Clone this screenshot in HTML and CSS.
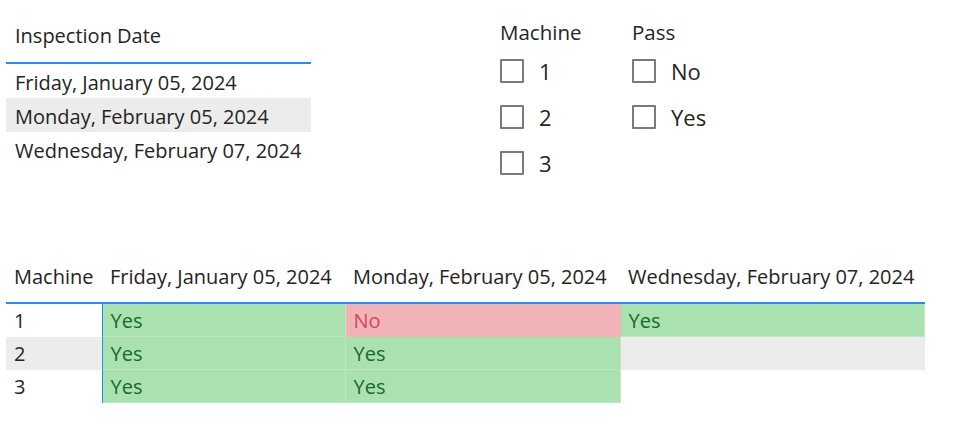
FILE: index.html
```html
<!DOCTYPE html>
<html lang="en">

<head>
  <meta charset="UTF-8" />
  <title>Inspections</title>
  <link rel="stylesheet" href="styles.css">
</head>

<body>
  <div class="arriba">
    <div class="lista-fechas">
      <div class="titulo-lista">Inspection Date</div>
      <div class="fila-fecha">Friday, January 05, 2024</div>
      <div class="fila-fecha gris">Monday, February 05, 2024</div>
      <div class="fila-fecha">Wednesday, February 07, 2024</div>
    </div>

    <div class="filtro">
      <div class="titulo-filtro">Machine</div>
      <div class="opcion"><span class="caja"></span>1</div>
      <div class="opcion"><span class="caja"></span>2</div>
      <div class="opcion"><span class="caja"></span>3</div>
    </div>

    <div class="filtro">
      <div class="titulo-filtro">Pass</div>
      <div class="opcion"><span class="caja"></span>No</div>
      <div class="opcion"><span class="caja"></span>Yes</div>
    </div>
  </div>

  <table class="matriz">
    <thead>
      <tr>
        <th class="col-maquina">Machine</th>
        <th class="col-a">Friday, January 05, 2024</th>
        <th class="col-b">Monday, February 05, 2024</th>
        <th class="col-c">Wednesday, February 07, 2024</th>
      </tr>
    </thead>
    <tbody>
      <tr>
        <td class="maquina">1</td>
        <td class="si">Yes</td>
        <td class="no">No</td>
        <td class="si">Yes</td>
      </tr>
      <tr class="gris">
        <td class="maquina">2</td>
        <td class="si">Yes</td>
        <td class="si">Yes</td>
        <td></td>
      </tr>
      <tr>
        <td class="maquina">3</td>
        <td class="si">Yes</td>
        <td class="si">Yes</td>
        <td class="vacio"></td>
      </tr>
    </tbody>
  </table>
</body>

</html>
```

FILE: styles.css
```css
body {
  margin: 0;
  font-family: "Open Sans", "Noto Sans", sans-serif;
  color: #252423;
  background: #fff;
}

.arriba {
  display: flex;
  height: 250px;
}

.lista-fechas {
  width: 305px;
  margin-left: 6px;
  margin-top: 18px;
}

.titulo-lista {
  font-size: 20px;
  height: 44px;
  line-height: 36px;
  padding-left: 9px;
  border-bottom: 2px solid #2a8cf0;
}

.fila-fecha {
  font-size: 20px;
  height: 32px;
  line-height: 34px;
  padding: 2px 0 0 9px;
  white-space: nowrap;
}

.gris {
  background-color: #ececec;
}

.filtro {
  margin-top: 19px;
  width: 132px;
}

.lista-fechas + .filtro {
  margin-left: 189px;
}

.titulo-filtro {
  font-size: 20.5px;
  font-weight: 500;
  height: 28px;
  line-height: 26px;
}

.opcion {
  display: flex;
  align-items: center;
  gap: 15px;
  height: 46px;
  font-size: 22px;
  padding-top: 2px;
  box-sizing: border-box;
}

.caja {
  width: 20px;
  height: 20px;
  border: 2px solid #7a7a7a;
  border-radius: 1px;
}

.matriz {
  margin-left: 6px;
  border-collapse: collapse;
  table-layout: fixed;
  width: 919px;
  font-size: 20px;
}

.matriz th {
  font-weight: normal;
  text-align: left;
  height: 52px;
  padding: 0 0 0 8px;
  border-bottom: 2px solid #2a8cf0;
  white-space: nowrap;
}

.col-maquina { width: 88px; }
.col-a { width: 235px; }
.col-b { width: 267px; }

.matriz td {
  height: 30px;
  line-height: 30px;
  padding: 2px 0 0 8px;
}

.matriz td.maquina {
  border-right: 1px solid #2a8cf0;
  background-color: #fff;
}

.matriz tr.gris td.maquina {
  background-color: #ececec;
}

.si {
  background-color: #aae1b0;
  color: #17692f;
  border: 1px solid #bde8c2;
}

.no {
  background-color: #f0b4b8;
  color: #d6455a;
  border: 1px solid #f0b4b8;
}

.vacio {
  background-color: #fff;
}
```
